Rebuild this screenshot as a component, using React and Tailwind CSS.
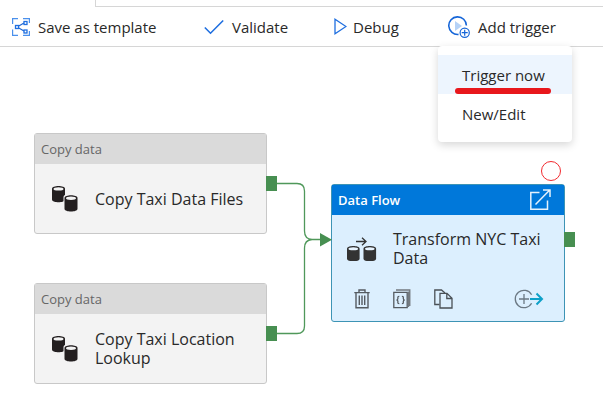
import React from "react";

function TemplateIcon() {
  return (
    <svg width="18" height="18" viewBox="0 0 18 18" fill="none" stroke="#4a90ec" strokeWidth="1.200" className="shrink-0">
      <path d="M.6 6V.6H6M11 .6h6.400V5M.6 11.500v5.900H6M11 17.400h6.400V13" />
      <path d="M6.800 8L12 5M6.800 10L12 13" stroke="#1f66d0" />
      <g stroke="#1f6fe0" strokeWidth="1.300">
        <rect x="3.500" y="7.500" width="3" height="3" />
        <rect x="12" y="3.500" width="3" height="3" />
        <rect x="12" y="12" width="3" height="3" />
      </g>
    </svg>
  );
}

function CheckIcon() {
  return (
    <svg width="20" height="16" viewBox="0 0 20 16" fill="none" stroke="#1f6fe0" strokeWidth="1.600" className="shrink-0">
      <path d="M.8 8.500L6.500 14.200 19.200 1.500" />
    </svg>
  );
}

function PlayIcon() {
  return (
    <svg width="13" height="17" viewBox="0 0 13 17" fill="none" stroke="#1f6fe0" strokeWidth="1.300" className="shrink-0">
      <path d="M1 1.300v14.400L12 8.500z" />
    </svg>
  );
}

function TriggerIcon() {
  return (
    <svg width="22" height="22" viewBox="0 0 22 22" fill="none" className="shrink-0">
      <path d="M18.400 9.600A8.800 8.800 0 1 0 10.500 18.400" stroke="#1565d8" strokeWidth="1.600" />
      <path d="M7 5v10l7-5z" fill="#b5d2f7" />
      <circle cx="16.700" cy="16.700" r="4.600" fill="#fff" stroke="#1565d8" strokeWidth="1.200" />
      <path d="M16.700 13.700v6M13.700 16.700h6" stroke="#1565d8" strokeWidth="1.200" />
    </svg>
  );
}

function Cylinder({ x, y, fill, top }) {
  return (
    <g transform={`translate(${x} ${y})`}>
      <path d="M0 2.800C0-.9 13-.9 13 2.800v10.700c0 3.700-13 3.700-13 0z" fill={fill} />
      <ellipse cx="6.500" cy="2.900" rx="5" ry="1.700" fill={top} />
    </g>
  );
}

function CopyIcon() {
  return (
    <svg width="26" height="26" viewBox="0 0 26 26" className="shrink-0">
      <Cylinder x={0} y={0} fill="#231f20" top="#f3f3f3" />
      <path d="M11.500 26V11c0-4 14-4 14-1z" fill="#f3f3f3" />
      <Cylinder x={12.5} y={9.3} fill="#231f20" top="#f3f3f3" />
    </svg>
  );
}

function FlowIcon() {
  return (
    <svg width="30" height="24" viewBox="0 0 30 24" fill="none" className="shrink-0">
      <path d="M9 4.500h10M15 .8l4 3.700-4 3.700" stroke="#333" strokeWidth="1.300" />
      <g transform="translate(0 9) scale(.97 .94)">
        <Cylinder x={0} y={0} fill="#333" top="#e8f4ff" />
        <Cylinder x={17} y={0} fill="#333" top="#e8f4ff" />
      </g>
    </svg>
  );
}

function ExternalIcon() {
  return (
    <svg width="21" height="21" viewBox="0 0 21 21" fill="none" stroke="#e6f2fc" strokeWidth="1.500">
      <path d="M9.500 3.500H.8v16.700h16.700V11.500M5.500 15.500L19.500 1.300M13 1h7v7" />
    </svg>
  );
}

function TrashIcon() {
  return (
    <svg width="16" height="20" viewBox="0 0 16 20" fill="none" stroke="#555b61" strokeWidth="1.400">
      <path d="M.3 3.600h15.400M5 3.500V1h6v2.500M2 4v14.800h12V4M5.300 6.500v9.500M8 6.500v9.500M10.700 6.500v9.500" />
    </svg>
  );
}

function CodeIcon() {
  return (
    <svg width="18" height="20" viewBox="0 0 18 20" fill="none" stroke="#555b61" strokeWidth="1.300">
      <path d="M.8 3.300h13.400v15.400H.8z" />
      <path d="M3 1h13.800v16M15.500 2.500v15.500" stroke="#737a80" />
      <path d="M6.300 7.300c-1.800 0-1.400 1-1.400 2.200 0 .9-.3 1.500-1.400 1.500 1.100 0 1.400.6 1.400 1.500 0 1.200-.4 2.200 1.400 2.200M8.900 7.300c1.800 0 1.400 1 1.400 2.200 0 .9.300 1.500 1.400 1.500-1.100 0-1.400.6-1.400 1.500 0 1.200.4 2.200-1.400 2.200" />
    </svg>
  );
}

function PagesIcon() {
  return (
    <svg width="19" height="20" viewBox="0 0 19 20" fill="none" stroke="#4a5056" strokeWidth="1.300">
      <path d="M5.500 15.500H.8V1h6.700l3.500 3" />
      <path d="M6 4.300h7l5 5v9.700H6zM12.800 4.300v5.200H18" />
    </svg>
  );
}

function AddOutputIcon() {
  return (
    <svg width="30" height="20" viewBox="0 0 30 20" fill="none">
      <path d="M17.600 5.800A8.700 8.700 0 1 0 17.600 14.200" stroke="#6b7883" strokeWidth="1.300" />
      <path d="M10 5v10M5 10h10" stroke="#6b7883" strokeWidth="1.300" />
      <path d="M16 10h12M22.500 4.500L28 10l-5.500 5.500" stroke="#0ea0c8" strokeWidth="2" />
    </svg>
  );
}

function ToolButton({ icon, label, className }) {
  return (
    <button type="button" className={`flex h-full shrink-0 items-center text-left whitespace-nowrap ${className}`}>
      {icon}
      <span className="pt-0.5">{label}</span>
    </button>
  );
}

function OutputPort() {
  return <span className="absolute left-full top-[42px] h-[15px] w-[11px] bg-[#478f51]" />;
}

function CopyNode({ name, className }) {
  return (
    <article className={`absolute h-[101px] w-[233px] rounded-[3px] border border-[#c8c8c8] bg-[#f3f3f3] ${className}`}>
      <header className="flex h-[30px] items-center bg-[#dadada] px-1.5 pt-0.5 text-[13px] text-[#666]">Copy data</header>
      <div className="flex h-[70px] items-center gap-[17px] pl-[17px]">
        <CopyIcon />
        <h2 className="w-[160px] text-base leading-[19px]">{name}</h2>
      </div>
      <OutputPort />
    </article>
  );
}

function DataFlowNode() {
  return (
    <article className="absolute top-[137px] left-[331px] h-[138px] w-[234px] rounded-[3px] border border-[#3d94b5] bg-[#dceffe]">
      <header className="flex h-[30px] items-center justify-between bg-[#0078da] pr-[13px] pb-px pl-1.5 text-[13px] font-semibold text-white">
        <span className="pt-0.5">Data Flow</span>
        <button type="button" aria-label="Open data flow"><ExternalIcon /></button>
      </header>
      <div className="flex h-[68px] items-center gap-4 pl-[15px]">
        <FlowIcon />
        <h2 className="w-[160px] text-base leading-[19px]">Transform NYC Taxi Data</h2>
      </div>
      <div className="flex h-8 items-center pr-5 pl-[22px]">
        <button type="button" aria-label="Delete" className="mr-[23px]"><TrashIcon /></button>
        <button type="button" aria-label="View code" className="mr-[23px]"><CodeIcon /></button>
        <button type="button" aria-label="Clone"><PagesIcon /></button>
        <button type="button" aria-label="Add output" className="ml-auto"><AddOutputIcon /></button>
      </div>
      <span className="absolute left-full top-[47px] h-[15px] w-[11px] bg-[#478f51]" />
    </article>
  );
}

export default function App() {
  return (
    <div className="flex min-h-screen flex-col bg-white font-['Open_Sans','Noto_Sans',sans-serif] text-[#292929]">
      <div className="flex h-[7px]">
        <div className="w-[95px]" />
        <div className="flex-1 border-b border-l border-[#d6d6d6]" />
      </div>
      <nav className="flex h-10 items-center border-b border-[#d6d6d6] pl-3 text-[15px]">
        <ToolButton icon={<TemplateIcon />} label="Save as template" className="w-48 gap-2" />
        <ToolButton icon={<CheckIcon />} label="Validate" className="w-[130px] gap-2" />
        <ToolButton icon={<PlayIcon />} label="Debug" className="w-[114px] gap-1.5" />
        <div className="relative h-full">
          <ToolButton icon={<TriggerIcon />} label="Add trigger" className="gap-2" />
          <div className="absolute top-[39px] -left-2.5 z-10 w-[134px] rounded-[4px] bg-white pt-[9px] pb-2 shadow-[0_3px_8px_rgba(0,0,0,0.16)]">
            <button type="button" className="relative flex h-[39px] w-full items-center bg-[#edf5fe] pt-0.5 pl-6">
              Trigger now
              <span className="absolute bottom-0 left-[17px] h-1.5 w-24 rounded-full bg-[#e8171c]" />
            </button>
            <button type="button" className="flex h-10 w-full items-center pl-6">New/Edit</button>
          </div>
        </div>
      </nav>
      <main className="relative min-h-[340px] flex-1">
        <CopyNode name="Copy Taxi Data Files" className="top-[86px] left-[34px]" />
        <CopyNode name="Copy Taxi Location Lookup" className="top-[236px] left-[34px]" />
        <DataFlowNode />
        <svg className="absolute top-[120px] left-[277px]" width="56" height="180" viewBox="0 0 56 180" fill="none">
          <path d="M0 16.500H20Q27.500 16.500 27.500 24V64Q27.500 72 35 72.500H44M0 166.500H20Q27.500 166.500 27.500 159V81Q27.500 73 35 72.500" stroke="#4f985a" strokeWidth="1.300" />
          <path d="M43 66v13.500l12-6.800z" fill="#478f51" />
        </svg>
        <button type="button" aria-label="Breakpoint" className="absolute top-[114px] left-[541px] size-5 rounded-full border border-[#f22a2f]" />
      </main>
    </div>
  );
}
